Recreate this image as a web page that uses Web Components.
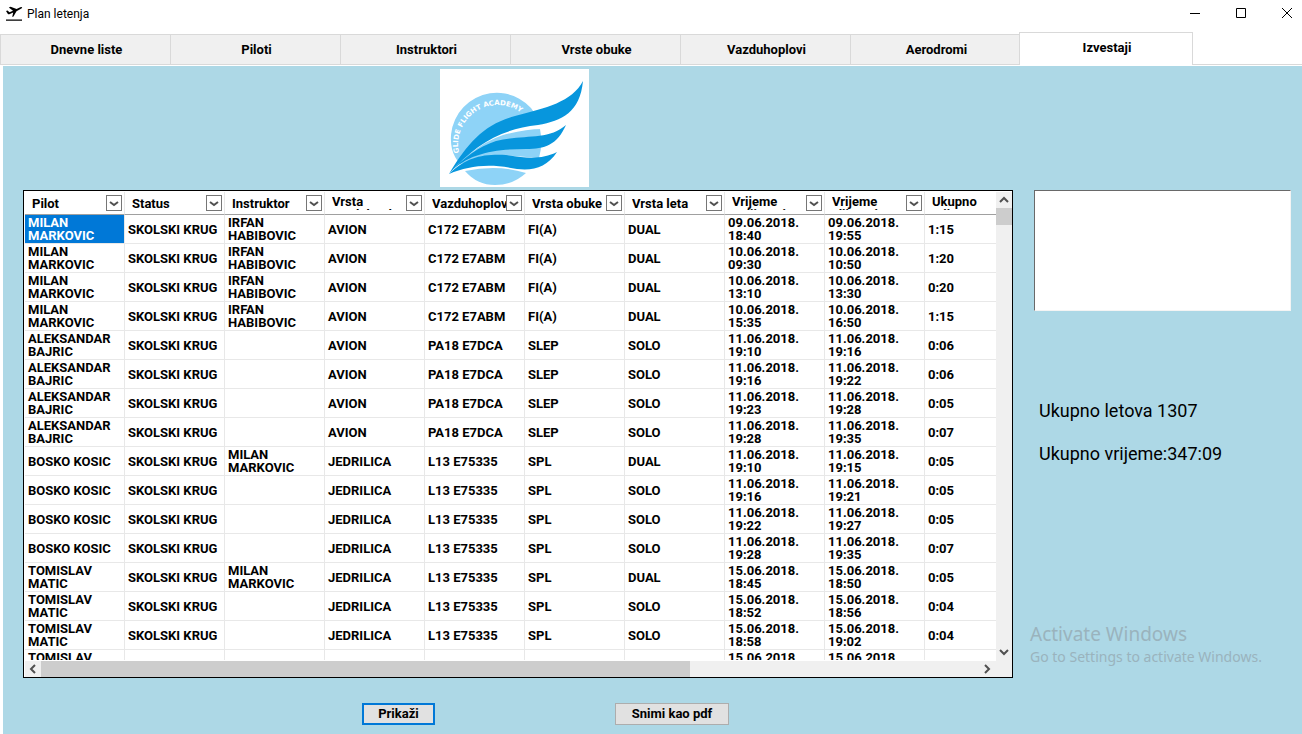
<!DOCTYPE html>
<html lang="bs">
<head>
<meta charset="utf-8">
<title>Plan letenja</title>
<style>
  html, body { height: 100%; }
  body { margin: 0; font: 13px/13px Roboto, "Liberation Sans", sans-serif; color: #000; background: #fff; overflow: hidden; }
</style>
</head>
<body>
<plan-window></plan-window>
<script>
const define = (name, html, setup) => customElements.define(name, class extends HTMLElement {
  connectedCallback() {
    if (this.shadowRoot) return;
    this.attachShadow({ mode: 'open' }).innerHTML = html;
    if (setup) setup(this.shadowRoot, this);
  }
});

define('title-bar', `
<style>
  :host { display: flex; align-items: center; height: 28px; padding-left: 5px; font-size: 12px; line-height: 16px; }
  .icon { width: 18px; height: 18px; margin-right: 4px; }
  span { flex: 1; }
  button { flex: none; width: 46px; height: 28px; padding: 0; border: 0; background: none; display: grid; place-items: center; }
  button:last-child { width: 30px; margin-left: 8px; }
</style>
<svg class="icon" viewBox="0 0 18 18" aria-hidden="true"><path d="M1 14.500h16v1.300H1zM1 6l1.500-.5 2 1.800 3.500-1.500-4.200-3.300 1.800-.8 6 2.200 3.700-1.600q1.700-.5 1.900.3 0 .8-1.700 1.500L11.500 6.300 8.500 11.500l-1.300.5 1-4.500-3.900 1.700q-1 .2-1.400-.3z"/></svg>
<span>Plan letenja</span>
<button aria-label="Minimize"><svg width="12" height="12" stroke="#000" fill="none"><path d="M1 5.500h10"/></svg></button>
<button aria-label="Maximize"><svg width="12" height="12" stroke="#000" fill="none"><path d="M1.500 .500h9v9h-9z"/></svg></button>
<button aria-label="Close"><svg width="12" height="12" stroke="#000" fill="none"><path d="M1 0l10 10M11 0L1 10"/></svg></button>
`);

define('tab-strip', `
<style>
  :host { display: flex; align-items: flex-end; height: 33px; margin-top: 4px; box-shadow: inset 0 -1px #d9d9d9; }
  button { box-sizing: border-box; flex: 0 1 170px; height: 31px; padding: 0 0 0 2px; font: bold 13px/16px Roboto, sans-serif; color: #000; background: #f0f0f0; border: 1px solid #d9d9d9; border-right: 0; }
  button.on { flex-basis: 174px; height: 33px; margin-left: -1px; padding-bottom: 2px; background: #fff; border: 1px solid #d9d9d9; border-bottom: 0; }
</style>`, (root, host) => {
  host.getAttribute('tabs').split(',').forEach((t, i, all) => {
    const b = document.createElement('button');
    b.textContent = t;
    if (i === all.length - 1) b.className = 'on';
    root.append(b);
  });
});

define('academy-logo', `
<style>
  :host { display: block; width: 149px; height: 118px; background: #fff; }
  svg { display: block; }
  text { font: bold 7px "DejaVu Sans", sans-serif; fill: #fff; }
</style>
<svg width="149" height="118" viewBox="0 0 149 118" role="img" aria-label="Glide Flight Academy">
  <path d="M100 60A46 46 0 0 0 91 39 46 46 0 0 0 12 80Q14 88 20 95L60 86 99 89Q103 75 100 60Z" fill="#8ed3f7"/>
  <path d="M25 102Q58 95 86 104 73 116 55 116 37 116 25 102Z" fill="#8ed3f7"/>
  <path d="M30 85Q45 72 63 66 85 60 102 60L124 50 98 50 50 64Z" fill="#fff"/>
  <path d="M9 105C28 73 45 55 75 47 106 39 132 33 143 12 140 43 122 52 98 56 62 60 35 75 9 105Z" fill="#0796dd"/>
  <path d="M9 104C25 88 38 78 56 72 83 65 108 72 126 56 117 76 105 80 86 80 55 80 29 84 9 104Z" fill="#0796dd"/>
  <path d="M9 105C27 88 42 85 66 86 89 90 103 90 117 83 107 98 94 102 77 100 48 94 29 97 9 105Z" fill="#0796dd"/>
  <defs><path id="arc" d="M19 84A39 39 0 0 1 96 67"/></defs>
  <text><textPath href="#arc">GLIDE FLIGHT ACADEMY</textPath></text>
</svg>
`);

const columns = ['Pilot', 'Status', 'Instruktor', 'Vrsta vazduhoplova', 'Vazduhoplov', 'Vrsta obuke', 'Vrsta leta', 'Vrijeme polijetanja', 'Vrijeme slijetanja', 'Ukupno vrijeme'];
const MM = 'MILAN MARKOVIC', IH = 'IRFAN HABIBOVIC', AB = 'ALEKSANDAR BAJRIC', BK = 'BOSKO KOSIC', TM = 'TOMISLAV MATIC';
const cessna = ['AVION', 'C172 E7ABM', 'FI(A)', 'DUAL'];
const piper = ['AVION', 'PA18 E7DCA', 'SLEP', 'SOLO'];
const glider = ['JEDRILICA', 'L13 E75335', 'SPL'];
const flights = [
  [MM, IH, ...cessna, '09.06.2018.', '18:40', '19:55', '1:15'],
  [MM, IH, ...cessna, '10.06.2018.', '09:30', '10:50', '1:20'],
  [MM, IH, ...cessna, '10.06.2018.', '13:10', '13:30', '0:20'],
  [MM, IH, ...cessna, '10.06.2018.', '15:35', '16:50', '1:15'],
  [AB, '', ...piper, '11.06.2018.', '19:10', '19:16', '0:06'],
  [AB, '', ...piper, '11.06.2018.', '19:16', '19:22', '0:06'],
  [AB, '', ...piper, '11.06.2018.', '19:23', '19:28', '0:05'],
  [AB, '', ...piper, '11.06.2018.', '19:28', '19:35', '0:07'],
  [BK, MM, ...glider, 'DUAL', '11.06.2018.', '19:10', '19:15', '0:05'],
  [BK, '', ...glider, 'SOLO', '11.06.2018.', '19:16', '19:21', '0:05'],
  [BK, '', ...glider, 'SOLO', '11.06.2018.', '19:22', '19:27', '0:05'],
  [BK, '', ...glider, 'SOLO', '11.06.2018.', '19:28', '19:35', '0:07'],
  [TM, MM, ...glider, 'DUAL', '15.06.2018.', '18:45', '18:50', '0:05'],
  [TM, '', ...glider, 'SOLO', '15.06.2018.', '18:52', '18:56', '0:04'],
  [TM, '', ...glider, 'SOLO', '15.06.2018.', '18:58', '19:02', '0:04'],
  [TM, '', ...glider, 'SOLO', '15.06.2018.', '19:05', '19:09', '0:04'],
];

define('flight-grid', `
<style>
  :host { display: grid; grid-template: minmax(0, 1fr) 16px / minmax(0, 1fr) 16px; box-sizing: border-box; border: 1px solid #000; padding: 1px 0 0 1px; background: #fff; }
  .view { overflow: hidden; margin-bottom: 1px; }
  table { table-layout: fixed; width: 1000px; border-collapse: separate; border-spacing: 0; font-weight: bold; }
  th, td { box-sizing: border-box; padding: 0; text-align: left; }
  th { height: 23px; border-bottom: 1px solid #a0a0a0; border-right: 1px solid #e8e8e8; }
  td { height: 29px; padding: 0 3px; border-right: 1px solid #e8e8e8; border-bottom: 1px solid #e8e8e8; vertical-align: middle; }
  td.sel { background: #0078d7; color: #fff; }
  .head { display: flex; align-items: center; height: 22px; overflow: hidden; padding: 0 2px 0 7px; }
  .head.two { align-items: flex-start; }
  .head.two span { margin-top: 3px; height: 15px; }
  .head.two button { margin-top: 3px; }
  span { flex: 1; min-width: 0; overflow: hidden; }
  button { flex: none; width: 16px; height: 16px; padding: 0; border: 1px solid #767676; background: #fff; display: grid; place-items: center; }
  .bar { display: flex; justify-content: space-between; align-items: center; background: #f0f0f0; }
  .v { flex-direction: column; }
  .corner { background: #f0f0f0; }
  .thumb { background: #cdcdcd; }
  .v .thumb { width: 16px; height: 17px; }
  .h .thumb { height: 16px; flex: 0 1 649px; }
  .rest { flex: 1; }
  svg { flex: none; fill: none; stroke: #505050; stroke-width: 2; }
</style>
<div class="view"><table><thead><tr></tr></thead><tbody></tbody></table></div>
<div class="bar v"><svg width="16" height="16"><path d="M4 10l4-4 4 4"/></svg><div class="thumb"></div><div class="rest"></div><svg width="16" height="18"><path d="M4 7l4 4 4-4"/></svg></div>
<div class="bar h"><svg width="16" height="16"><path d="M10 4L6 8l4 4"/></svg><div class="thumb"></div><div class="rest"></div><svg width="16" height="16"><path d="M5 4l4 4-4 4"/></svg></div>
<div class="corner"></div>
`, root => {
  const arrow = '<button aria-label="Filter"><svg width="10" height="8"><path d="M1 3l4 3 4-3"/></svg></button>';
  root.querySelector('thead tr').innerHTML = columns.map((c, i) =>
    `<th><div class="head ${[3, 7, 8, 9].includes(i) ? 'two' : ''}"><span>${c}</span>${i < 9 ? arrow : ''}</div></th>`).join('');
  root.querySelector('tbody').innerHTML = flights.map(([pilot, instr, kind, plane, training, type, date, from, to, total], r) =>
    '<tr>' + [pilot, 'SKOLSKI KRUG', instr, kind, plane, training, type, date + ' ' + from, date + ' ' + to, total]
      .map((v, c) => `<td${r + c === 0 ? ' class="sel"' : ''}>${v}</td>`).join('') + '</tr>').join('');
});

define('side-panel', `
<style>
  :host { display: flex; flex-direction: column; }
  textarea { box-sizing: border-box; width: 100%; height: 121px; resize: none; background: #fff; border: 1px solid; border-color: #696969 #f4f4f4 #f4f4f4 #696969; outline: 0; margin: 0; }
  .totals { margin: 90px 0 0 5px; font-size: 18px; line-height: 20px; }
  p { margin: 0 0 23px; }
  .mark { margin: auto 0 11px -4px; color: #9ab3bd; font: 14px/20px "Noto Sans", "Open Sans", sans-serif; }
  .mark b { display: block; font-weight: normal; font-size: 19px; line-height: 26px; }
</style>
<textarea aria-label="Rezultat"></textarea>
<div class="totals"><p>Ukupno letova 1307</p><p>Ukupno vrijeme:347:09</p></div>
<div class="mark"><b>Activate Windows</b>Go to Settings to activate Windows.</div>
`);

define('plan-window', `
<style>
  :host { display: flex; flex-direction: column; height: 100vh; }
  main { flex: 1; min-height: 0; display: grid; grid-template: 124px minmax(0, 1fr) 56px / minmax(0, 1fr) 257px; column-gap: 21px; margin: 1px 0 0 3px; padding: 0 11px 0 20px; background: #add8e6; }
  .logo { display: flex; justify-content: center; padding: 3px 8px 0 0; }
  flight-grid { grid-area: 2 / 1; }
  side-panel { grid-area: 2 / 2; }
  .actions { grid-area: 3 / 1; display: flex; justify-content: center; gap: 180px; padding: 25px 0 0 55px; }
  .actions button { box-sizing: border-box; height: 22px; width: 114px; padding: 0; font: bold 13px/16px Roboto, sans-serif; color: #000; background: #e1e1e1; border: 1px solid #adadad; }
  .actions .main { width: 73px; border: 2px solid #0078d7; }
</style>
<title-bar></title-bar>
<tab-strip tabs="Dnevne liste,Piloti,Instruktori,Vrste obuke,Vazduhoplovi,Aerodromi,Izvestaji"></tab-strip>
<main>
  <div class="logo"><academy-logo></academy-logo></div>
  <flight-grid></flight-grid>
  <side-panel></side-panel>
  <div class="actions"><button class="main">Prikaži</button><button>Snimi kao pdf</button></div>
</main>
`);
</script>
</body>
</html>
